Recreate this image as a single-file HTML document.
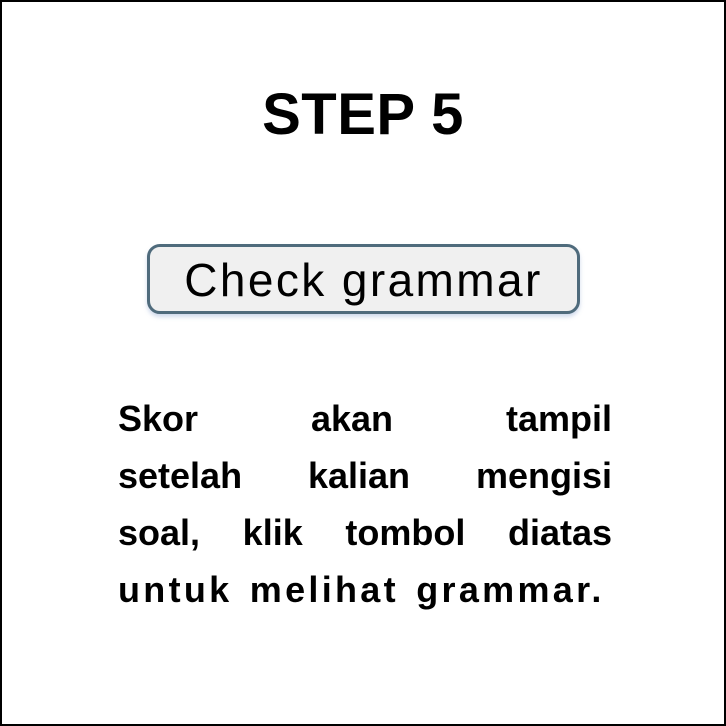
<!DOCTYPE html>
<html><head><style>
html,body{margin:0;padding:0;background:#fff;}
.f{position:absolute;left:0;top:0;width:722px;height:722px;border:2px solid #000;}
h1{position:absolute;top:81px;left:0;width:726px;text-align:center;margin:0;font:bold 58px "Liberation Sans",sans-serif;letter-spacing:0.5px;}
.b{position:absolute;left:147px;top:244px;width:427px;height:64px;border:3px solid #4f6b7c;border-radius:13px;background:#f0f0f0;box-shadow:0 3px 4px rgba(120,150,200,.35);font:46px "Liberation Sans",sans-serif;text-align:center;line-height:66px;letter-spacing:2.4px;}
.p{position:absolute;left:118px;top:390px;width:494px;font:bold 36px "Liberation Sans",sans-serif;line-height:57px;}
.l{text-align:justify;text-align-last:justify;height:57px;}
.n{text-align:left;letter-spacing:3.3px;word-spacing:4px;}
</style></head><body>
<div class="f"></div>
<h1>STEP 5</h1>
<div class="b">Check grammar</div>
<div class="p">
<div class="l">Skor akan tampil</div>
<div class="l">setelah kalian mengisi</div>
<div class="l">soal, klik tombol diatas</div>
<div class="n">untuk melihat grammar.</div>
</div>
</body></html>
